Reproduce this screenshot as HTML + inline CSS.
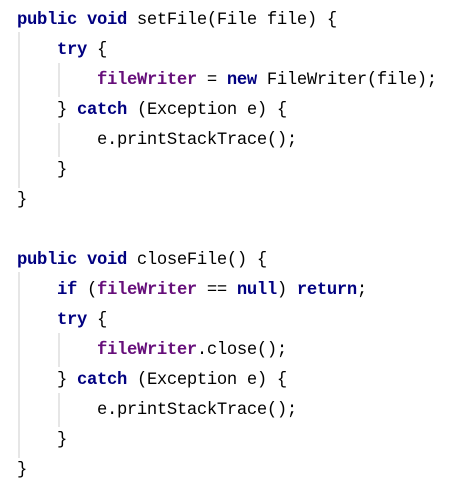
<!DOCTYPE html>
<html><head><style>
body{margin:0;background:#fff;width:463px;height:486px;overflow:hidden;position:relative}
pre{margin:0;position:absolute;left:17px;top:6px;font-family:"Liberation Mono",monospace;font-size:17.2px;letter-spacing:-0.32px;line-height:30px;color:#000}
.k{color:#000080;font-weight:bold}
.f{color:#660E7A;font-weight:bold}
.g{position:absolute;width:2px;background:#e6e6e6}
</style></head><body>
<div class="g" style="left:18px;top:32px;height:156px"></div>
<div class="g" style="left:58px;top:63px;height:34px"></div>
<div class="g" style="left:58px;top:123px;height:34px"></div>
<div class="g" style="left:18px;top:272px;height:186px"></div>
<div class="g" style="left:58px;top:333px;height:34px"></div>
<div class="g" style="left:58px;top:393px;height:34px"></div>
<pre><span class="k">public void</span> setFile(File file) {
    <span class="k">try</span> {
        <span class="f">fileWriter</span> = <span class="k">new</span> FileWriter(file);
    } <span class="k">catch</span> (Exception e) {
        e.printStackTrace();
    }
}

<span class="k">public void</span> closeFile() {
    <span class="k">if</span> (<span class="f">fileWriter</span> == <span class="k">null</span>) <span class="k">return</span>;
    <span class="k">try</span> {
        <span class="f">fileWriter</span>.close();
    } <span class="k">catch</span> (Exception e) {
        e.printStackTrace();
    }
}</pre>
</body></html>
